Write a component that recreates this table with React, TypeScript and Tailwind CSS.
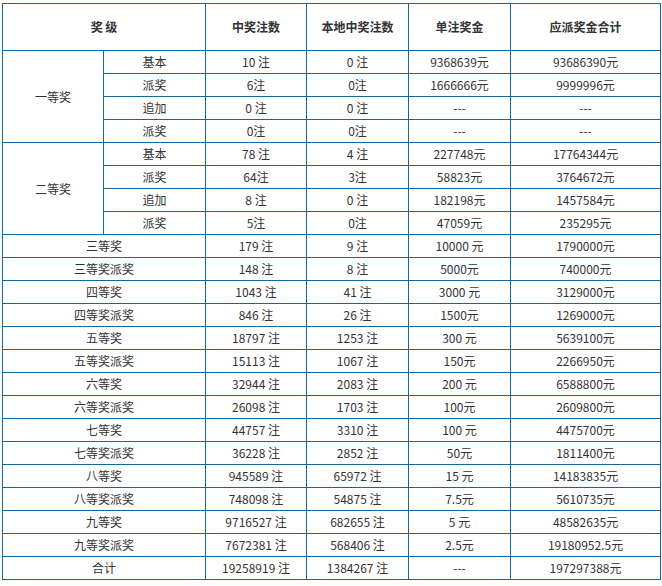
import React from "react";

type Row = [string, string, string, string, string];

const first: Row[] = [
  ["基本", "10 注", "0 注", "9368639元", "93686390元"],
  ["派奖", "6注", "0注", "1666666元", "9999996元"],
  ["追加", "0 注", "0 注", "---", "---"],
  ["派奖", "0注", "0注", "---", "---"],
];
const second: Row[] = [
  ["基本", "78 注", "4 注", "227748元", "17764344元"],
  ["派奖", "64注", "3注", "58823元", "3764672元"],
  ["追加", "8 注", "0 注", "182198元", "1457584元"],
  ["派奖", "5注", "0注", "47059元", "235295元"],
];
const rest: Row[] = [
  ["三等奖", "179 注", "9 注", "10000 元", "1790000元"],
  ["三等奖派奖", "148 注", "8 注", "5000元", "740000元"],
  ["四等奖", "1043 注", "41 注", "3000 元", "3129000元"],
  ["四等奖派奖", "846 注", "26 注", "1500元", "1269000元"],
  ["五等奖", "18797 注", "1253 注", "300 元", "5639100元"],
  ["五等奖派奖", "15113 注", "1067 注", "150元", "2266950元"],
  ["六等奖", "32944 注", "2083 注", "200 元", "6588800元"],
  ["六等奖派奖", "26098 注", "1703 注", "100元", "2609800元"],
  ["七等奖", "44757 注", "3310 注", "100 元", "4475700元"],
  ["七等奖派奖", "36228 注", "2852 注", "50元", "1811400元"],
  ["八等奖", "945589 注", "65972 注", "15 元", "14183835元"],
  ["八等奖派奖", "748098 注", "54875 注", "7.5元", "5610735元"],
  ["九等奖", "9716527 注", "682655 注", "5 元", "48582635元"],
  ["九等奖派奖", "7672381 注", "568406 注", "2.5元", "19180952.5元"],
  ["合计", "19258919 注", "1384267 注", "---", "197297388元"],
];

const cell = "border border-[#11689e] text-center align-middle p-0 whitespace-nowrap";

export default function App() {
  return (
    <div
      className="pt-[3px] pl-[2px] bg-white text-[#333] text-[12px]"
      style={{ fontFamily: '"Noto Sans CJK SC", "Noto Sans", sans-serif' }}
    >
      <table className="border-collapse table-fixed w-[658px]">
        <colgroup>
          <col className="w-[101px]" />
          <col className="w-[102px]" />
          <col className="w-[101px]" />
          <col className="w-[102px]" />
          <col className="w-[102px]" />
          <col className="w-[150px]" />
        </colgroup>
        <thead>
          <tr className="h-[47px] font-bold">
            <th colSpan={2} className={cell}>奖 级</th>
            <th className={cell}>中奖注数</th>
            <th className={cell}>本地中奖注数</th>
            <th className={cell}>单注奖金</th>
            <th className={cell}>应派奖金合计</th>
          </tr>
        </thead>
        <tbody>
          {first.map((r, i) => (
            <tr key={"a" + i} className="h-[23px]">
              {i === 0 && (
                <td rowSpan={4} className={cell}>一等奖</td>
              )}
              {r.map((c, j) => (
                <td key={j} className={cell}>{c}</td>
              ))}
            </tr>
          ))}
          {second.map((r, i) => (
            <tr key={"b" + i} className="h-[23px]">
              {i === 0 && (
                <td rowSpan={4} className={cell}>二等奖</td>
              )}
              {r.map((c, j) => (
                <td key={j} className={cell}>{c}</td>
              ))}
            </tr>
          ))}
          {rest.map((r, i) => (
            <tr key={"c" + i} className="h-[23px]">
              <td colSpan={2} className={cell}>{r[0]}</td>
              {r.slice(1).map((c, j) => (
                <td key={j} className={cell}>{c}</td>
              ))}
            </tr>
          ))}
        </tbody>
      </table>
    </div>
  );
}
